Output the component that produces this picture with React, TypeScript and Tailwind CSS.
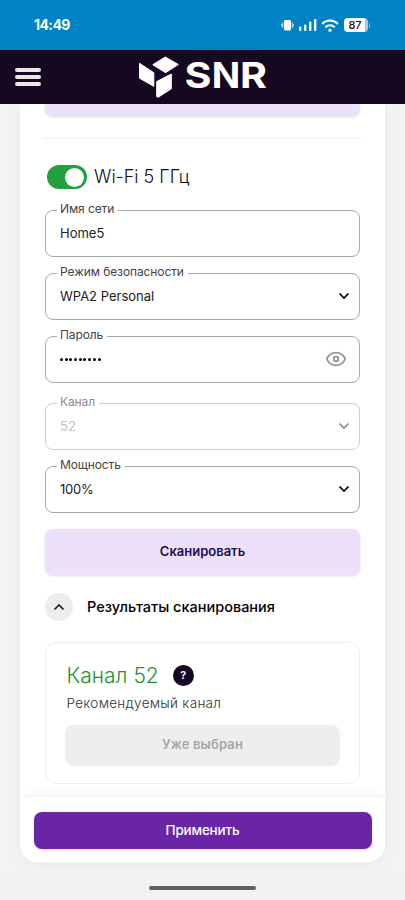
import React from 'react';
import clsx from 'clsx';

type FieldProps = {
  label: string;
  value: string;
  kind?: 'text' | 'select' | 'password';
  disabled?: boolean;
  valueClass?: string;
  className?: string;
};

const Chevron: React.FC<{ className?: string }> = ({ className }) => (
  <svg viewBox="0 0 12 8" className={className} fill="none" stroke="currentColor" strokeWidth="1.7">
    <path d="M1.500 1.500 6 6l4.500-4.500" />
  </svg>
);

const EyeIcon = () => (
  <svg viewBox="0 0 22 16" className="h-4 w-[22px] text-[#929292]" fill="none" stroke="currentColor" strokeWidth="1.7">
    <path d="M1.800 8C3.500 4 6.900 1.700 11 1.700S18.500 4 20.200 8C18.500 12 15.100 14.300 11 14.300S3.500 12 1.800 8Z" />
    <circle cx="11" cy="8" r="2.300" />
  </svg>
);

const Field: React.FC<FieldProps> = ({ label, value, kind = 'text', disabled, valueClass, className }) => (
  <div className={clsx('relative flex h-[47px] shrink-0 items-center justify-between rounded-lg border pb-px pl-[14px]', disabled ? 'border-[#cfcfcf]' : 'border-[#a9a9a9]', className)}>
    <span
      className={clsx(
        'absolute -top-[10px] left-[11px] bg-white pr-1 pl-[3px] text-[12px] leading-4 tracking-[-0.1px] whitespace-nowrap',
        disabled ? 'text-[#8b8b8b]' : 'text-[#444]',
      )}
    >
      {label}
    </span>
    {kind === 'password' ? (
      <span className="flex gap-[1.700px]">
        {value.split('').map((_, i) => (
          <i key={i} className="size-[3px] rounded-full bg-black" />
        ))}
      </span>
    ) : (
      <span className={clsx('text-[13px] leading-5', disabled ? 'text-[#c4c4c4]' : 'text-[#222]', valueClass)}>{value}</span>
    )}
    {kind === 'select' && <Chevron className={clsx('mr-[9px] h-2 w-3', disabled ? 'text-[#8c8c8c]' : 'text-black')} />}
    {kind === 'password' && <span className="mr-3"><EyeIcon /></span>}
  </div>
);

const StatusBar = () => (
  <div className="flex h-[50px] shrink-0 items-center justify-between bg-[#0083c6] pr-[35px] pl-[34px] text-white">
    <span className="text-[14px] leading-4 font-bold tracking-[-0.6px]">14:49</span>
    <div className="flex items-center">
      <svg viewBox="0 0 13 12" className="h-3 w-[13px]" fill="currentColor">
        <rect x="3" y="1" width="7" height="10.500" rx="1.200" />
        <path d="M1.200 3.500h1v5.500h-1zM10.800 3.500h1v5.500h-1zM0 5h.7v2.500H0zM12.300 5h.7v2.500h-.7z" opacity=".8" />
      </svg>
      <svg viewBox="0 0 18 12" className="ml-[5px] h-3 w-[18px]" fill="currentColor">
        <rect x="0" y="7.500" width="2.400" height="4.500" rx="1" />
        <rect x="5" y="5.500" width="2.400" height="6.500" rx="1" />
        <rect x="10" y="2.500" width="2.400" height="9.500" rx="1" />
        <rect x="15" y="0" width="2.400" height="12" rx="1" />
      </svg>
      <svg viewBox="0 0 18 13" className="ml-[4px] h-[13px] w-[18px]" fill="none" stroke="currentColor" strokeWidth="2">
        <path d="M1.200 5C5.500.4 12.500.4 16.800 5M4.300 8.300c2.700-2.700 6.700-2.700 9.400 0" />
        <circle cx="9" cy="11.200" r="1.600" fill="currentColor" stroke="none" />
      </svg>
      <span className="ml-[5px] flex h-[14px] w-6 items-center justify-center rounded-[4px] bg-gradient-to-r from-white from-87% to-[#9bcbe8] to-87% pr-px text-[11px] leading-none font-medium text-[#111]">
        87
      </span>
      <i className="ml-[1.500px] h-[5px] w-px rounded-r bg-[#7cbce0]" />
    </div>
  </div>
);

const Header = () => (
  <header className="grid h-[54px] shrink-0 grid-cols-[138px_1fr] items-center bg-[#170822]">
    <div className="ml-[15px] flex w-[25.500px] flex-col gap-[3px]">
      <i className="h-1 rounded-full bg-[#e8e8e8]" />
      <i className="h-1 rounded-full bg-[#e8e8e8]" />
      <i className="h-1 rounded-full bg-[#e8e8e8]" />
    </div>
    <svg viewBox="0 0 130 44" className="h-11 w-[130px]" fill="#fff">
      <g stroke="#fff" strokeWidth="1" strokeLinejoin="round">
        <path d="m14.800 9.700 12.500-7.700 13 7.500-12.700 8.200Z" />
        <path d="m1.500 8.300 14.300 9.400v13.600L1.500 23.200Z" />
        <path d="M18.700 26.600 33.300 19v14.800L20.300 42.200l-1.600-.5Z" />
      </g>
      <text y="33" fontFamily="Inter, sans-serif" fontSize="35.500" fontWeight="700">
        <tspan x="46.500" textLength="27" lengthAdjust="spacingAndGlyphs">S</tspan>
        <tspan x="73.700" textLength="28.500" lengthAdjust="spacingAndGlyphs">N</tspan>
        <tspan x="102" textLength="27" lengthAdjust="spacingAndGlyphs">R</tspan>
      </text>
    </svg>
  </header>
);

const ScanResult = () => (
  <div className="mt-[21px] flex h-[142px] shrink-0 flex-col rounded-xl border border-[#ececec] px-5 pt-[19px]">
    <div className="flex h-[27px] items-center gap-[14px] pl-[0.500px]">
      <span className="text-[21px] leading-[27px] font-light text-[#25912f]">Канал 52</span>
      <span className="flex size-[21px] items-center justify-center rounded-full bg-[#170822] text-[11px] font-semibold text-white">?</span>
    </div>
    <p className="mt-[5px] pl-[0.500px] text-[13.500px] leading-[18px] font-light tracking-[0.300px] text-[#333]">Рекомендуемый канал</p>
    <button className="mt-[13px] h-[39px] w-[273px] shrink-0 rounded-lg bg-[#eee] text-[13px] font-semibold tracking-[0.150px] text-[#a6a6a6] shadow-[0_1px_3px_rgba(0,0,0,0.14)]">
      Уже выбран
    </button>
  </div>
);

export default function App() {
  return (
    <div className="flex h-[900px] w-[405px] flex-col overflow-hidden bg-[#f3f3f3] font-['Inter',sans-serif]">
      <StatusBar />
      <Header />
      <main className="mx-5 flex h-[758px] shrink-0 flex-col overflow-hidden rounded-b-[18px] bg-white shadow-[0_2px_16px_rgba(0,0,0,0.04)]">
        <div className="flex h-[694px] shrink-0 flex-col px-[25px]">
          <div className="h-3 shrink-0 rounded-b-lg bg-[#ece0fa] shadow-[0_1px_3px_rgba(0,0,0,0.14)]" />
          <hr className="-mx-0.5 mt-[22px] border-[#eee]" />
          <div className="mt-[26px] flex h-6 shrink-0 items-center gap-[7px] pl-0.5">
            <span className="flex h-6 w-10 items-center justify-end rounded-full bg-[#249f3e] pr-[3px]">
              <i className="size-[19px] rounded-full bg-white" />
            </span>
            <h2 className="-mt-px text-[18px] leading-6 font-light text-[#111]">Wi-Fi 5 ГГц</h2>
          </div>
          <Field className="mt-[21px]" label="Имя сети" value="Home5" />
          <Field className="mt-4" label="Режим безопасности" value="WPA2 Personal" kind="select" />
          <Field className="mt-4" label="Пароль" value="•••••••••" kind="password" />
          <Field className="mt-5" label="Канал" value="52" kind="select" disabled />
          <Field className="mt-4" label="Мощность" value="100%" kind="select" valueClass="tracking-[-0.2px]" />
          <button className="mt-4 h-[46px] shrink-0 rounded-lg bg-[#ece0fa] text-[13px] font-semibold text-[#250a4d] shadow-[0_1px_3px_rgba(0,0,0,0.14)]">
            Сканировать
          </button>
          <div className="mt-[18px] flex h-7 shrink-0 items-center gap-[14px]">
            <span className="flex size-7 items-center justify-center rounded-full bg-[#ededed]">
              <Chevron className="h-2 w-3 rotate-180 text-[#222]" />
            </span>
            <h3 className="text-[14.500px] leading-5 font-medium text-black">Результаты сканирования</h3>
          </div>
          <ScanResult />
        </div>
        <footer className="flex h-16 shrink-0 bg-white px-[13.500px] pt-[14px] shadow-[0_-2px_12px_rgba(0,0,0,0.05)]">
          <button className="h-[37px] flex-1 rounded-lg bg-[#6a25a6] text-[13.500px] font-medium tracking-[-0.2px] text-white shadow-[0_1px_3px_rgba(0,0,0,0.14)]">
            Применить
          </button>
        </footer>
      </main>
      <div className="mt-[15px] flex h-[23px] shrink-0 justify-center bg-[#f1f2f4] pt-[9px]">
        <i className="h-[3.500px] w-[107px] rounded-full bg-[#606060]" />
      </div>
    </div>
  );
}
